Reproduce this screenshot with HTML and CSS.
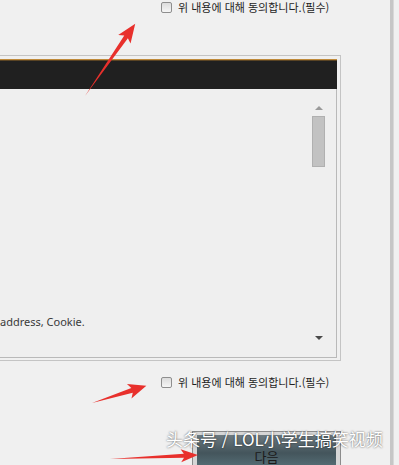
FILE: index.html
```html
<!DOCTYPE html>
<html lang="ko">
  <head>
    <meta charset="UTF-8" />
    <meta name="viewport" content="width=device-width, initial-scale=1.0" />
    <title>약관 동의</title>
    <link rel="stylesheet" href="styles.css">
  </head>
  <body>
    <div class="screen">
      <div class="main">
        <label class="agree agree-top">
          <span class="check"></span>
          <span>위 내용에 대해 동의합니다.(필수)</span>
        </label>
        <div class="panel">
          <div class="banner"></div>
          <div class="terms">
            <p class="terms-text">address, Cookie.</p>
            <div class="scrollbar">
              <span class="arrow-up"></span>
              <span class="thumb"></span>
              <span class="arrow-down"></span>
            </div>
          </div>
        </div>
        <label class="agree agree-bottom">
          <span class="check"></span>
          <span>위 내용에 대해 동의합니다.(필수)</span>
        </label>
        <div class="actions">
          <div class="btn-frame">
            <button class="btn-next">다음</button>
          </div>
        </div>
      </div>
      <div class="edge"></div>
    </div>

    <!-- red annotation arrows drawn over the screenshot -->
    <svg class="marks" width="399" height="465" viewBox="0 0 399 465">
      <g fill="#e8302c">
        <g transform="translate(85 96) rotate(-55.2)">
          <polygon points="0,0 72,-2.2 69,-7.5 88,0 69,7.5 72,2.2" />
        </g>
        <g transform="translate(92 403) rotate(-17.5)">
          <polygon points="0,0 42,-2.4 39,-7.5 57,0 39,7.5 42,2.4" />
        </g>
        <g transform="translate(110 459) rotate(-2.6)">
          <polygon points="0,0 74,-2 71,-6.5 88,0 71,6.5 74,2" />
        </g>
      </g>
    </svg>
    <div class="watermark">头条号 / LOL小学生搞笑视频</div>
  </body>
</html>
```

FILE: styles.css
```css
body {
  margin: 0;
  width: 399px;
  height: 465px;
  overflow: hidden;
  position: relative;
  background-color: #f0f0f0;
  font-family: "Noto Sans CJK KR", "Noto Sans", sans-serif;
  color: #222;
}
.screen {
  display: flex;
  height: 465px;
}
.main {
  width: 390px;
  display: flex;
  flex-direction: column;
}
.edge {
  width: 3px;
  background-color: #c6c6c6;
  border-right: 1px solid #d8d8d8;
}
.agree {
  display: flex;
  align-items: center;
  gap: 6px;
  height: 14px;
  padding-left: 161px;
  font-size: 11px;
  line-height: 14px;
  color: #1e1e1e;
}
.agree-bottom {
  margin-top: 14px;
}
.check {
  width: 9px;
  height: 9px;
  border: 1px solid #8e8e8e;
  border-radius: 2px;
  background: linear-gradient(#dcdcdc, #f6f6f6);
}
.panel {
  margin-top: 41px;
  margin-left: -60px;
  width: 401px;
  box-sizing: border-box;
  border: 1px solid #c4c4c4;
  border-left: none;
  padding: 3px 3px 2px 0;
}
.banner {
  height: 29px;
  background-color: #202020;
  border-top: 1px solid #c08a3a;
  box-shadow: inset 0 1px 0 #5a4424;
}
.terms {
  height: 268px;
  display: flex;
  justify-content: space-between;
  border-right: 1px solid #b9b9b9;
  border-bottom: 1px solid #b9b9b9;
  background-color: #efefef;
}
.terms-text {
  align-self: flex-end;
  margin: 0 0 27px 60px;
  font-family: "Noto Sans", sans-serif;
  font-size: 11px;
  line-height: 16px;
  color: #3a3a3a;
}
.scrollbar {
  width: 17px;
  margin-right: 9px;
  padding: 17px 0 17px;
  display: flex;
  flex-direction: column;
  align-items: center;
}
.arrow-up {
  width: 0;
  height: 0;
  border-left: 4px solid transparent;
  border-right: 4px solid transparent;
  border-bottom: 4px solid #9a9a9a;
}
.thumb {
  margin-top: 6px;
  width: 11px;
  height: 49px;
  background-color: #c2c2c2;
  border: 1px solid #b0b0b0;
}
.arrow-down {
  margin-top: auto;
  width: 0;
  height: 0;
  border-left: 4px solid transparent;
  border-right: 4px solid transparent;
  border-top: 4px solid #4a4a4a;
}
.actions {
  margin-top: 42px;
  padding-left: 192px;
}
.btn-frame {
  width: 149px;
  height: 40px;
  box-sizing: border-box;
  border: 1px solid #8c8c8c;
  border-bottom: none;
  background-color: #d6d6d6;
  padding: 3px 4px 0;
}
.btn-next {
  display: block;
  width: 100%;
  height: 40px;
  border: none;
  padding: 4px 0 0;
  background: linear-gradient(#6d7a80, #44555c 45%, #5f7c84);
  font-family: "Noto Sans CJK KR", sans-serif;
  font-size: 13px;
  line-height: 16px;
  color: #1a1a1a;
  text-align: center;
}
.marks {
  position: absolute;
  left: 0;
  top: 0;
}
.watermark {
  position: absolute;
  left: 166px;
  top: 427px;
  font-family: "Noto Sans CJK SC", sans-serif;
  font-size: 17px;
  line-height: 24px;
  color: #ffffff;
  text-shadow: 0 0 2px rgba(0, 0, 0, 0.7);
  white-space: nowrap;
}
```
